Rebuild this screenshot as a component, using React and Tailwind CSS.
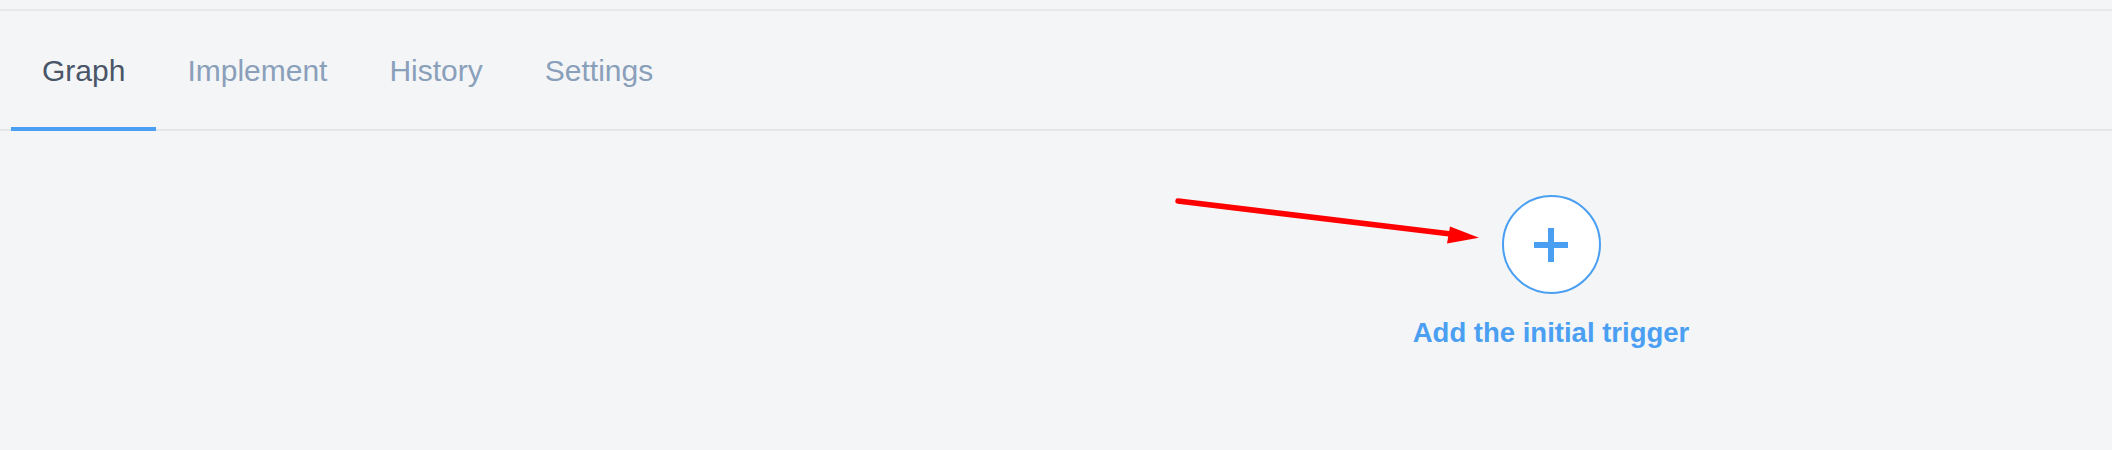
import React from "react";

const tabs = ["Graph", "Implement", "History", "Settings"];

export default function App() {
  return (
    <div className="relative w-full h-[450px] bg-[#f4f5f7] font-['Liberation_Sans',Arial,sans-serif] overflow-hidden">
      <div className="h-[11px] border-b-2 border-[#e6e8eb]" />
      <div className="flex pl-[11px] border-b-2 border-[#e4e6e9]">
        {tabs.map((t, i) => (
          <div
            key={t}
            className={
              i === 0
                ? "h-[120px] px-[31px] flex items-center pt-[3px] border-b-4 border-[#4a9ff2] text-[#4a5568] text-[30px] -mb-[2px]"
                : "h-[120px] px-[31px] flex items-center pt-[3px] border-b-4 border-transparent text-[#8a9fba] text-[30px] -mb-[2px]"
            }
          >
            {t}
          </div>
        ))}
      </div>
      <div className="flex">
        <div className="ml-[1401px] mt-[64px] w-[300px] flex flex-col items-center">
          <button className="w-[99px] h-[99px] rounded-full bg-white border-2 border-[#4a9ff2] flex items-center justify-center">
            <svg width="34" height="34" viewBox="0 0 34 34">
              <rect x="0" y="14" width="34" height="6" fill="#4a9ff2" />
              <rect x="14" y="0" width="6" height="34" fill="#4a9ff2" />
            </svg>
          </button>
          <div className="mt-[21px] text-[27.5px] font-bold text-[#4a9ff2] leading-[36px] whitespace-nowrap">
            Add the initial trigger
          </div>
        </div>
      </div>
      <svg
        className="absolute left-0 top-0 pointer-events-none"
        width="2112"
        height="450"
        viewBox="0 0 2112 450"
      >
        <line x1="1178" y1="201" x2="1455" y2="234.5" stroke="#ff0000" strokeWidth="5.5" strokeLinecap="round" />
        <polygon points="1450,226.5 1479,237.8 1447,243.5" fill="#ff0000" />
      </svg>
    </div>
  );
}
